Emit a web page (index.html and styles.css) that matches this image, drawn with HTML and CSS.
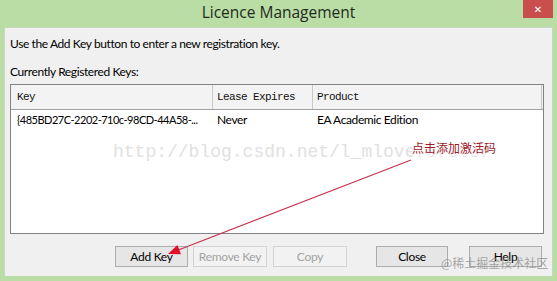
FILE: index.html
```html
<!DOCTYPE html>
<html>
<head>
<meta charset="utf-8">
<link rel="stylesheet" href="styles.css">
</head>
<body>
<div class="window">
  <div class="titlebar">
    <span class="spacer"></span>
    <span class="title">Licence Management</span>
    <span class="close">&#x2715;</span>
  </div>
  <div class="panel">
    <p class="hint">Use the Add Key button to enter a new registration key.</p>
    <p class="label">Currently Registered Keys:</p>
    <div class="list">
      <div class="list-head">
        <div class="col c-key">Key</div>
        <div class="col c-lease">Lease Expires</div>
        <div class="col c-prod">Product</div>
      </div>
      <div class="list-row">
        <div class="cell c-key">{485BD27C-2202-710c-98CD-44A58-...</div>
        <div class="cell c-lease">Never</div>
        <div class="cell c-prod">EA Academic Edition</div>
      </div>
    </div>
    <div class="buttons">
      <button class="btn b-add">Add Key</button>
      <button class="btn b-remove" disabled>Remove Key</button>
      <button class="btn b-copy" disabled>Copy</button>
      <button class="btn b-close">Close</button>
      <button class="btn b-help">Help</button>
    </div>
  </div>
</div>
<div class="wm-url">http://blog.csdn.net/l_mloveforever</div>
<div class="note">点击添加激活码</div>
<svg class="arrow" width="557" height="281" viewBox="0 0 557 281">
  <line x1="411" y1="160" x2="179" y2="249.7" stroke="#c8324e" stroke-width="1.2"/>
  <polygon points="168,254 181,254.3 177.4,245" fill="#e0102a"/>
</svg>
<div class="wm-juejin">@稀土掘金技术社区</div>
</body>
</html>
```

FILE: styles.css
```css
html, body {
  margin: 0;
  padding: 0;
}
body {
  width: 557px;
  height: 281px;
  background: #badda5;
  position: relative;
  overflow: hidden;
  font-family: "Open Sans", "Noto Sans", sans-serif;
}
.window {
  display: flex;
  flex-direction: column;
  height: 281px;
}
.titlebar {
  height: 27px;
  display: grid;
  grid-template-columns: 1fr auto 1fr;
  align-items: start;
}
.title {
  font-size: 15.5px;
  line-height: 24px;
  color: #1e2a1e;
}
.close {
  justify-self: end;
  margin-right: 4px;
  width: 30px;
  height: 18px;
  background: #c94f4f;
  color: #fff;
  font-size: 10px;
  font-weight: bold;
  display: flex;
  align-items: center;
  justify-content: center;
  font-family: "DejaVu Sans", sans-serif;
}
.panel {
  margin: 0 4px;
  height: 249px;
  box-sizing: border-box;
  border: 1px solid #c8d8c0;
  border-bottom: none;
  background: #f0f0f0;
  padding: 0 8px 0 5px;
  display: flex;
  flex-direction: column;
  font-family: "Lato", "Open Sans", sans-serif;
  font-size: 12px;
  letter-spacing: -0.4px;
  color: #000;
}
.hint {
  margin: 8px 0 0 0;
  line-height: 16px;
}
.label {
  margin: 12px 0 0 0;
  line-height: 16px;
}
.list {
  margin-top: 4px;
  height: 150px;
  box-sizing: border-box;
  border: 1px solid #828282;
  background: #fff;
}
.list-head {
  display: flex;
  height: 25px;
  box-sizing: border-box;
  border-bottom: 1px solid #a0a0a0;
  background: #f3f3f3;
  font-family: "Liberation Mono", "DejaVu Sans Mono", monospace;
  font-size: 11px;
  letter-spacing: -0.6px;
  color: #111;
}
.col {
  box-sizing: border-box;
  border-right: 1px solid #c8c8c8;
  line-height: 24px;
  padding-left: 4px;
}
.c-key { width: 202px; padding-left: 6px; flex: none; }
.c-lease { width: 100px; flex: none; }
.c-prod { width: 229px; flex: none; }
.list-row {
  display: flex;
  height: 18px;
  line-height: 18px;
  margin-top: 1px;
}
.cell {
  box-sizing: border-box;
  padding-left: 4px;
  white-space: nowrap;
  overflow: hidden;
}
.cell.c-key {
  padding-left: 6px;
  font-size: 11px;
  letter-spacing: -0.5px;
}
.buttons {
  display: flex;
  justify-content: flex-end;
  margin-top: 12px;
  padding-right: 2px;
}
.btn {
  height: 21px;
  width: 73px;
  box-sizing: border-box;
  border: 1px solid #adadad;
  background: #e6e6e6;
  font-family: inherit;
  font-size: 12px;
  letter-spacing: -0.3px;
  color: #000;
  padding: 0;
}
.btn:disabled {
  border-color: #d3d3d3;
  background: #f2f2f2;
  color: #a3a3a3;
}
.b-remove { width: 74px; margin-left: 5px; }
.b-copy { width: 74px; margin-left: 6px; }
.b-close { width: 72px; margin-left: 29px; }
.b-help { margin-left: 21px; }
.wm-url {
  position: absolute;
  left: 113px;
  top: 141px;
  font-family: "Liberation Mono", monospace;
  font-size: 18px;
  line-height: 22px;
  color: #e1e1e1;
  white-space: nowrap;
}
.note {
  position: absolute;
  left: 412px;
  top: 140px;
  font-family: "Noto Sans CJK SC", sans-serif;
  font-size: 12px;
  line-height: 16px;
  color: #9b1b2b;
  background: rgba(255,255,255,0.5);
  white-space: nowrap;
}
.arrow {
  position: absolute;
  left: 0;
  top: 0;
}
.wm-juejin {
  position: absolute;
  left: 441px;
  top: 255px;
  font-family: "Noto Sans CJK SC", sans-serif;
  font-size: 12px;
  line-height: 16px;
  color: rgba(140,140,140,0.75);
  white-space: nowrap;
}
```
